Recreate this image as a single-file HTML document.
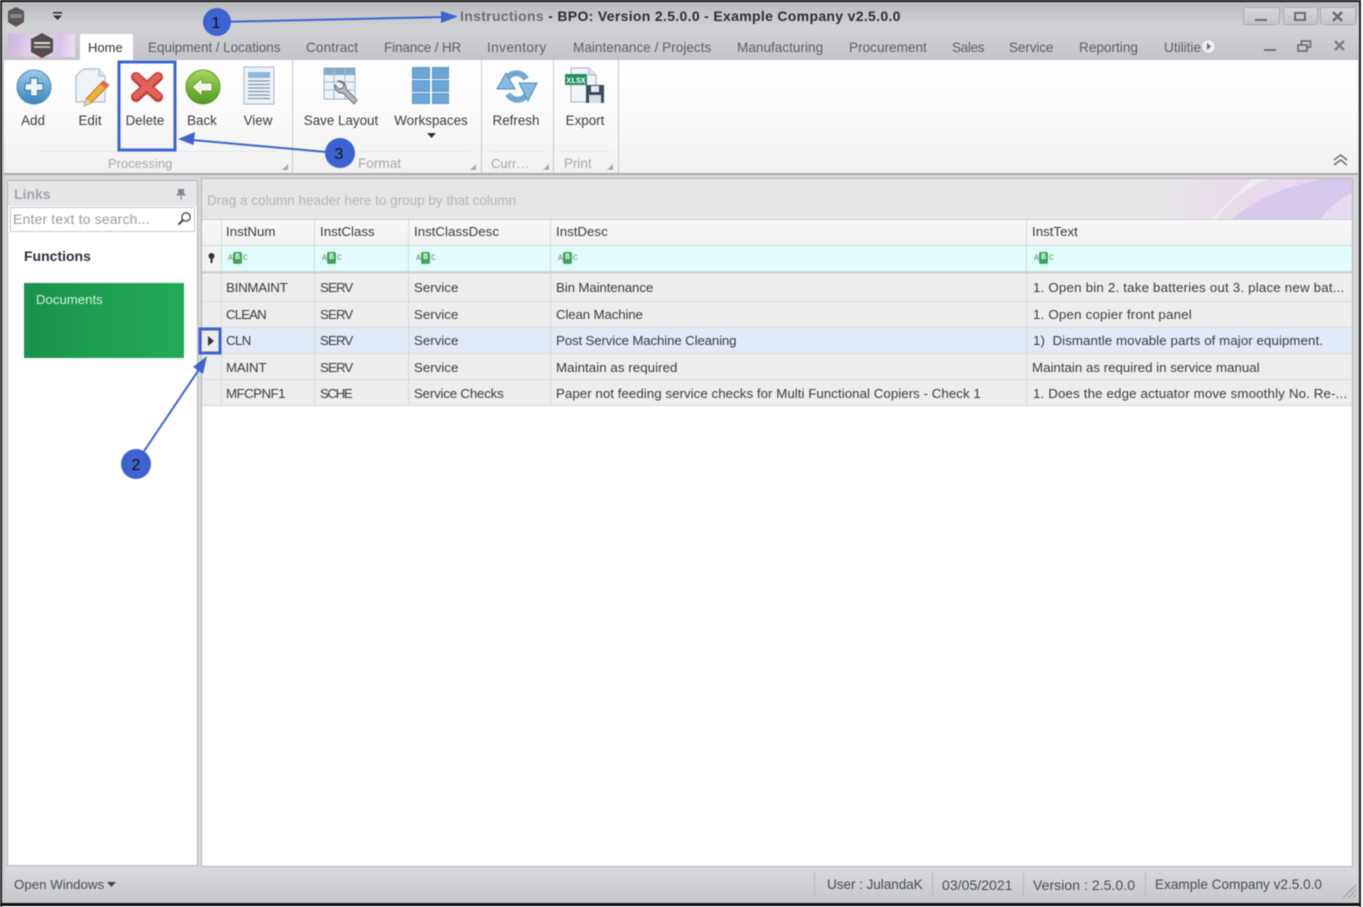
<!DOCTYPE html>
<html><head><meta charset="utf-8"><style>
html,body{margin:0;padding:0;width:1363px;height:907px;overflow:hidden;background:#fff}
body{font-family:"Liberation Sans",sans-serif;font-size:13.3px;color:#3c3c3c}
#w{position:absolute;left:0;top:0;width:1363px;height:907px;overflow:hidden;filter:blur(.4px)}
.a{position:absolute}
.t{position:absolute;white-space:nowrap;line-height:16px}
.c{transform:translateX(-50%)}
.tab{color:#5f6066;top:40px;font-size:13.6px}
.g{color:#a9a9a9;top:156px;font-size:13px}
.l{position:absolute;background:#d4d4d4}
.abc{position:absolute;top:252px;width:22px;height:13px}
.abc i{position:absolute;font:normal 8px "Liberation Mono",monospace;color:#777;top:3px;line-height:7px}
.abc b{position:absolute;left:5px;top:0;width:9px;height:12px;background:#3fa653;border-radius:2px;color:#dff;font:bold 8px "Liberation Mono",monospace;line-height:12px;text-align:center}
.sb{color:#4a4c58;top:877px;font-size:13.6px}
.sep{position:absolute;top:872px;width:1px;height:24px;background:#b9bac0}
.rb{font-size:13.4px;top:113px}
.k{letter-spacing:-.9px}
</style></head><body><div id="w">
<!-- window -->
<div class="a" style="left:2px;top:2px;width:1357px;height:901px;background:linear-gradient(#c9cacd,#c4c5c9 60px);"></div>
<div class="a" style="left:2px;top:2px;width:1357px;height:58px;background:linear-gradient(#b9babd,#d2d3d6 25px,#c2c3c8)"></div>

<!-- app icon -->
<svg class="a" style="left:6px;top:6px" width="20" height="22"><polygon points="10,1 18,5 18,16 10,21 2,16 2,5" fill="#5a5656"/><rect x="4" y="8" width="12" height="4" fill="#8a8888"/><path d="M8 16h5l-2 3z" fill="#7d3b3b"/></svg>
<svg class="a" style="left:52px;top:12px" width="11" height="9"><rect x="1" y="0" width="9" height="1.6" fill="#333"/><path d="M1 3.5h9L5.500 8z" fill="#333"/></svg>

<!-- title -->
<div class="t" style="left:460px;top:8px;font-weight:bold;font-size:14px;color:#2d2d2f;letter-spacing:.32px"><span style="color:#6c6d72">Instructions</span> - BPO: Version 2.5.0.0 - Example Company v2.5.0.0</div>

<!-- window buttons -->
<div class="a" style="left:1243px;top:7px;width:35px;height:16px;border:1px solid #a9aaae;border-radius:3px;background:linear-gradient(#d6d7da,#c3c4c8)"></div>
<div class="a" style="left:1283px;top:7px;width:33px;height:16px;border:1px solid #a9aaae;border-radius:3px;background:linear-gradient(#d6d7da,#c3c4c8)"></div>
<div class="a" style="left:1320px;top:7px;width:34px;height:16px;border:1px solid #a9aaae;border-radius:3px;background:linear-gradient(#d6d7da,#c3c4c8)"></div>
<div class="a" style="left:1255px;top:19px;width:12px;height:2px;background:#6a6b70"></div>
<div class="a" style="left:1294px;top:12px;width:8px;height:5px;border:2px solid #6a6b70"></div>
<svg class="a" style="left:1331px;top:11px" width="13" height="11"><path d="M2 1l9 9M11 1l-9 9" stroke="#6a6b70" stroke-width="2.4"/></svg>

<!-- app menu button -->
<div class="a" style="left:8px;top:34px;width:67px;height:23px;background:linear-gradient(100deg,#c9b2dd,#e6d3ee 40%,#d9c3e8 75%,#efe2f2)"></div>
<svg class="a" style="left:29px;top:32px" width="26" height="27"><polygon points="13,1 24,7 24,20 13,26 2,20 2,7" fill="#514e4e"/><rect x="5" y="10" width="16" height="2" fill="#ddd"/><rect x="5" y="14" width="16" height="2" fill="#bbb"/><path d="M9 21h7l-3 4z" fill="#8a3b3b"/></svg>

<!-- tabs -->
<div class="a" style="left:80px;top:34px;width:53px;height:27px;background:#fff;border-radius:2px 2px 0 0"></div>
<div class="t" style="left:88px;top:40px;color:#333;font-size:13px">Home</div>
<div class="t tab" style="left:148px;letter-spacing:-.1px">Equipment / Locations</div>
<div class="t tab" style="left:306px;letter-spacing:.1px">Contract</div>
<div class="t tab" style="left:384px;letter-spacing:-.18px">Finance / HR</div>
<div class="t tab" style="left:487px;letter-spacing:.4px">Inventory</div>
<div class="t tab" style="left:573px">Maintenance / Projects</div>
<div class="t tab" style="left:737px">Manufacturing</div>
<div class="t tab" style="left:849px">Procurement</div>
<div class="t tab" style="left:952px;letter-spacing:-.4px">Sales</div>
<div class="t tab" style="left:1009px;letter-spacing:-.15px">Service</div>
<div class="t tab" style="left:1079px">Reporting</div>
<div class="t tab" style="left:1164px;width:38px;overflow:hidden">Utilities</div>
<svg class="a" style="left:1201px;top:39px" width="15" height="15"><circle cx="7.500" cy="7.500" r="7" fill="#eee" stroke="#bbb"/><path d="M6 4l4 3.500L6 11z" fill="#666"/></svg>
<div class="a" style="left:1264px;top:49px;width:12px;height:2px;background:#73747a"></div>
<svg class="a" style="left:1297px;top:40px" width="15" height="13"><rect x="4.500" y="1" width="9" height="6" fill="none" stroke="#6a6b70" stroke-width="1.600"/><rect x="1" y="5" width="9" height="6" fill="#c4c5c9" stroke="#6a6b70" stroke-width="1.600"/></svg>
<svg class="a" style="left:1333px;top:40px" width="13" height="11"><path d="M2 1l9 9M11 1l-9 9" stroke="#7a7b80" stroke-width="2.400"/></svg>

<!-- ribbon -->
<div class="a" style="left:4px;top:60px;width:1354px;height:113px;background:linear-gradient(#fff,#fafafa 50%,#f1f1f2);border-bottom:2px solid #a9aaae;box-sizing:content-box"></div>
<div class="l" style="left:292px;top:60px;width:1px;height:113px;background:#c9cacc"></div>
<div class="l" style="left:481px;top:60px;width:1px;height:113px;background:#c9cacc"></div>
<div class="l" style="left:553px;top:60px;width:1px;height:113px;background:#c9cacc"></div>
<div class="l" style="left:618px;top:60px;width:1px;height:113px;background:#c9cacc"></div>
<div class="l" style="left:40px;top:151px;width:240px;height:1px;background:#e6e6e7"></div>
<div class="l" style="left:300px;top:151px;width:170px;height:1px;background:#e6e6e7"></div>
<div class="l" style="left:490px;top:151px;width:55px;height:1px;background:#e6e6e7"></div>
<div class="l" style="left:560px;top:151px;width:50px;height:1px;background:#e6e6e7"></div>

<!-- add -->
<svg class="a" style="left:15px;top:68px" width="38" height="38"><defs><linearGradient id="ga" x1="0" y1="0" x2="0" y2="1"><stop offset="0" stop-color="#9ccbe8"/><stop offset="1" stop-color="#3a86c0"/></linearGradient><linearGradient id="gb" x1="0" y1="0" x2="0" y2="1"><stop offset="0" stop-color="#a9d65c"/><stop offset="1" stop-color="#4f9a1e"/></linearGradient></defs><circle cx="19" cy="19" r="17" fill="url(#ga)" stroke="#4b8dbd" stroke-width="1"/><path d="M15.500 10h7v5.500H28v7h-5.500V28h-7v-5.500H10v-7h5.500z" fill="#eef5fb" stroke="#3f7fb0" stroke-width="1.200"/></svg>
<!-- edit -->
<svg class="a" style="left:74px;top:67px" width="38" height="40"><path d="M9 2h16l6 7v26H2V9z" fill="#eef2f9" stroke="#b0bbcc" stroke-width="1.200"/><path d="M25 2v7h6" fill="#dde4ee" stroke="#b0bbcc"/><path d="M29 14l6 4-18 18-7 3 2-7z" fill="#f2b133" stroke="#a5701a" stroke-width=".8"/><path d="M29 14l6 4-3 3-6-4z" fill="#d8665c"/><path d="M12 32l-2 7 7-3z" fill="#e6d0a8"/></svg>
<!-- delete -->
<svg class="a" style="left:130px;top:71px" width="34" height="32"><path d="M6 6L28 26M28 6L6 26" stroke="#c23b36" stroke-width="10" stroke-linecap="round"/><path d="M6 5.500L28 25M28 5.500L6 25" stroke="#e2615a" stroke-width="6.500" stroke-linecap="round"/></svg>
<!-- back -->
<svg class="a" style="left:185px;top:69px" width="36" height="36"><circle cx="18" cy="18" r="17" fill="url(#gb)" stroke="#5a9a2a"/><path d="M7 18l10-9v5h10v8H17v5z" fill="#f4f8ec" stroke="#6f9f3f"/></svg>
<!-- view -->
<svg class="a" style="left:243px;top:66px" width="33" height="40"><rect x="1" y="1" width="30" height="37" fill="#eef3fa" stroke="#a8b4c8"/><rect x="5" y="6" width="22" height="6" fill="#8fb6dc"/><path d="M5 15h22M5 18.500h22M5 22h22M5 25.500h22M5 29h22M5 32.500h22" stroke="#8295ad" stroke-width="1.200"/></svg>
<!-- save layout -->
<svg class="a" style="left:323px;top:66px" width="38" height="40"><rect x="1" y="2" width="31" height="31" fill="#eef3f9" stroke="#9fb0c4"/><rect x="1" y="2" width="31" height="7" fill="#82aacd"/><path d="M1 16h31M1 24h31M11 2v31M22 2v31" stroke="#a9bad0"/><path d="M15 15a7 7 0 0 1 8 8l11 11-3 4-11-11a7 7 0 0 1-8-8l4 4 4-1 1-4z" fill="#b7babd" stroke="#6b6f74"/></svg>
<!-- workspaces -->
<svg class="a" style="left:412px;top:67px" width="38" height="38" fill="#6ba6d6" stroke="#5a96c8"><rect x=".5" y=".5" width="17" height="11"/><rect x="20.500" y=".5" width="16" height="11"/><rect x=".5" y="13.500" width="17" height="11"/><rect x="20.500" y="13.500" width="16" height="11"/><rect x=".5" y="26.500" width="17" height="10"/><rect x="20.500" y="26.500" width="16" height="10"/></svg>
<!-- refresh -->
<svg class="a" style="left:496px;top:68px" width="42" height="36" fill="none"><path d="M10 20A11 11 0 0 1 30 11" stroke="#6fa9d0" stroke-width="6"/><path d="M32 17A11 11 0 0 1 12 26" stroke="#6fa9d0" stroke-width="6"/><path d="M1 21L10 5l9 16z" fill="#86bce0" stroke="#4c8cbc"/><path d="M41 15L32 33l-9-18z" fill="#86bce0" stroke="#4c8cbc"/></svg>
<!-- export -->
<svg class="a" style="left:565px;top:67px" width="40" height="38"><path d="M6 1h18l7 7v27H6z" fill="#f1f4f9" stroke="#a5b0c2"/><path d="M24 1v7h7" fill="#dfe5ee" stroke="#a5b0c2"/><rect x="0" y="7" width="22" height="11" fill="#1f8f5f"/><text x="11" y="16" font-family="Liberation Mono" font-size="8" font-weight="bold" fill="#fff" text-anchor="middle">XLSX</text><rect x="21" y="18" width="18" height="18" fill="#3c4a5e"/><rect x="26" y="19" width="8" height="6" fill="#e8ecf2"/><rect x="24" y="28" width="12" height="8" fill="#d5dde8"/></svg>

<!-- ribbon labels -->
<div class="t c rb" style="left:33px">Add</div>
<div class="t c rb" style="left:90px">Edit</div>
<div class="t c rb" style="left:145px">Delete</div>
<div class="t c rb" style="left:202px">Back</div>
<div class="t c rb" style="left:258px">View</div>
<div class="t c rb" style="left:341px">Save Layout</div>
<div class="t c rb" style="left:431px">Workspaces</div>
<svg class="a" style="left:427px;top:133px" width="9" height="6"><path d="M0 0h9L4.500 5z" fill="#333"/></svg>
<div class="t c rb" style="left:516px">Refresh</div>
<div class="t c rb" style="left:585px">Export</div>
<div class="t g" style="left:108px">Processing</div>
<div class="t g" style="left:358px;font-size:13.6px">Format</div>
<div class="t g" style="left:491px">Curr&hellip;</div>
<div class="t g" style="left:564px;font-size:13.4px">Print</div>
<svg class="a" style="left:0;top:0" width="1363" height="180" fill="#a9a9ab"><path d="M288 164v6h-6zM476 164v6h-6zM549 164v6h-6zM613 164v6h-6z"/><path d="M1334 160l6.500-5 6.500 5M1334 165l6.500-5 6.500 5" fill="none" stroke="#6f7074" stroke-width="1.500"/></svg>

<!-- body bg -->
<div class="a" style="left:4px;top:175px;width:1354px;height:692px;background:#d7d8da"></div>

<!-- left panel -->
<div class="a" style="left:7px;top:180px;width:189px;height:684px;background:#fff;border:1px solid #b4b5b8"></div>
<div class="a" style="left:8px;top:181px;width:189px;height:25px;background:#e6e6e8"></div>
<div class="t" style="left:14px;top:186px;font-weight:bold;color:#a2a4a9;font-size:14px">Links</div>
<svg class="a" style="left:176px;top:188px" width="10" height="12"><path d="M2 1h6v5h1.500v1.500H.5V6H2zM4.500 7.500h1V12h-1z" fill="#85868b"/></svg>
<div class="a" style="left:10px;top:207px;width:183px;height:23px;background:#fff;border:1px solid #c8c9cc"></div>
<div class="t" style="left:13px;top:211px;color:#9a9a9c;font-size:14px;letter-spacing:.16px">Enter text to search...</div>
<svg class="a" style="left:177px;top:211px" width="15" height="15"><circle cx="9" cy="6" r="4.200" fill="none" stroke="#444" stroke-width="1.300"/><path d="M6 9L1.500 13.500" stroke="#444" stroke-width="2"/></svg>
<div class="t" style="left:24px;top:248px;font-weight:bold;color:#2b3040;font-size:14px">Functions</div>
<div class="a" style="left:24px;top:283px;width:160px;height:75px;background:linear-gradient(90deg,#19934b,#22ab57)"></div>
<div class="t" style="left:36px;top:292px;color:#d7f0df;font-size:13.2px">Documents</div>

<!-- grid -->
<div class="a" style="left:201px;top:178px;width:1150px;height:687px;background:#fff;border:1px solid #b4b5b8;box-sizing:content-box"></div>
<div class="a" style="left:202px;top:179px;width:1150px;height:40px;background:#e6e6e8;overflow:hidden">
<svg width="1150" height="40" style="position:absolute;left:0;top:0"><defs><linearGradient id="gp" x1="0" x2="1" y1="0" y2="0"><stop offset="0" stop-color="#e6e6e8"/><stop offset=".5" stop-color="#ead9ec"/><stop offset="1" stop-color="#e7dcf0"/></linearGradient></defs><rect x="960" width="190" height="40" fill="url(#gp)"/><path d="M1030 40c25-20 50-32 90-40h30v14c-15 8-25 17-32 26z" fill="#d6c9ec"/><path d="M1010 40c15-16 30-30 40-40h16c-25 10-40 25-52 40z" fill="#eeeef0"/></svg></div>
<div class="t" style="left:207px;top:193px;color:#b4b5b8;font-size:13.5px">Drag a column header here to group by that column</div>

<!-- header row -->
<div class="a" style="left:202px;top:220px;width:1150px;height:25px;background:linear-gradient(#f8f8f8,#f1f1f2)"></div>
<div class="a" style="left:222px;top:246px;width:1130px;height:25px;background:#e0fdfb"></div>
<div class="a" style="left:202px;top:246px;width:20px;height:25px;background:#f2f2f3"></div>
<div class="a" style="left:202px;top:219px;width:1150px;height:1px;background:#cfd0d2"></div>
<div class="a" style="left:202px;top:245px;width:1150px;height:1px;background:#d5d6d8"></div>
<div class="a" style="left:202px;top:271px;width:1150px;height:3px;background:#d2d3d5"></div>
<div class="t" style="left:226px;top:224px">InstNum</div>
<div class="t" style="left:320px;top:224px">InstClass</div>
<div class="t" style="left:414px;top:224px">InstClassDesc</div>
<div class="t" style="left:556px;top:224px">InstDesc</div>
<div class="t" style="left:1032px;top:224px">InstText</div>
<svg class="a" style="left:207px;top:253px" width="9" height="11"><circle cx="4.500" cy="3" r="3" fill="#333"/><path d="M3.500 5h2v5h-2z" fill="#333"/></svg>
<div class="abc" style="left:228px"><i style="left:0">A</i><b>B</b><i style="left:15px">C</i></div>
<div class="abc" style="left:322px"><i style="left:0">A</i><b>B</b><i style="left:15px">C</i></div>
<div class="abc" style="left:416px"><i style="left:0">A</i><b>B</b><i style="left:15px">C</i></div>
<div class="abc" style="left:558px"><i style="left:0">A</i><b>B</b><i style="left:15px">C</i></div>
<div class="abc" style="left:1034px"><i style="left:0">A</i><b>B</b><i style="left:15px">C</i></div>

<!-- rows -->
<div class="a" style="left:202px;top:275px;width:1150px;height:131px;background:#eeeded"></div>
<div class="a" style="left:222px;top:328px;width:1130px;height:25px;background:#e1ebf8"></div>
<div class="a" style="left:202px;top:301px;width:1150px;height:1px;background:#d8d8da"></div>
<div class="a" style="left:202px;top:327px;width:1150px;height:1px;background:#d8d8da"></div>
<div class="a" style="left:202px;top:353px;width:1150px;height:1px;background:#d8d8da"></div>
<div class="a" style="left:202px;top:379px;width:1150px;height:1px;background:#d8d8da"></div>
<div class="a" style="left:202px;top:405px;width:1150px;height:1px;background:#d8d8da"></div>
<div class="a" style="left:221px;top:220px;width:1px;height:186px;background:#d8d8da"></div>
<div class="a" style="left:314px;top:220px;width:1px;height:186px;background:#d8d8da"></div>
<div class="a" style="left:408px;top:220px;width:1px;height:186px;background:#d8d8da"></div>
<div class="a" style="left:550px;top:220px;width:1px;height:186px;background:#d8d8da"></div>
<div class="a" style="left:1026px;top:220px;width:1px;height:186px;background:#d8d8da"></div>

<div class="t" style="left:226px;top:280px;letter-spacing:-.25px">BINMAINT</div><div class="t k" style="left:320px;top:280px">SERV</div><div class="t" style="left:414px;top:280px">Service</div><div class="t" style="left:556px;top:280px;letter-spacing:-.13px">Bin Maintenance</div><div class="t" style="left:1033px;top:280px;letter-spacing:.2px">1. Open bin 2. take batteries out 3. place new bat...</div>
<div class="t k" style="left:226px;top:307px">CLEAN</div><div class="t k" style="left:320px;top:307px">SERV</div><div class="t" style="left:414px;top:307px">Service</div><div class="t" style="left:556px;top:307px;letter-spacing:-.15px">Clean Machine</div><div class="t" style="left:1033px;top:307px;letter-spacing:.2px">1. Open copier front panel</div>
<div class="t" style="left:226px;top:333px;letter-spacing:-.6px">CLN</div><div class="t k" style="left:320px;top:333px">SERV</div><div class="t" style="left:414px;top:333px">Service</div><div class="t" style="left:556px;top:333px;letter-spacing:-.15px">Post Service Machine Cleaning</div><div class="t" style="left:1033px;top:333px;letter-spacing:.07px">1)&nbsp; Dismantle movable parts of major equipment.</div>
<div class="t" style="left:226px;top:360px;letter-spacing:-.2px">MAINT</div><div class="t k" style="left:320px;top:360px">SERV</div><div class="t" style="left:414px;top:360px">Service</div><div class="t" style="left:556px;top:360px;letter-spacing:.05px">Maintain as required</div><div class="t" style="left:1032px;top:360px">Maintain as required in service manual</div>
<div class="t" style="left:226px;top:386px;letter-spacing:-.55px">MFCPNF1</div><div class="t k" style="left:320px;top:386px;letter-spacing:-1.400px">SCHE</div><div class="t" style="left:414px;top:386px;letter-spacing:-.2px">Service Checks</div><div class="t" style="left:556px;top:386px;letter-spacing:.04px">Paper not feeding service checks for Multi Functional Copiers - Check 1</div><div class="t" style="left:1033px;top:386px;letter-spacing:.15px">1. Does the edge actuator move smoothly No. Re-...</div>

<svg class="a" style="left:208px;top:336px" width="6" height="10"><path d="M0 0l6 5-6 5z" fill="#333"/></svg>

<!-- status bar -->
<div class="a" style="left:4px;top:867px;width:1354px;height:36px;background:linear-gradient(#d9dadc,#c6c7cc)"></div>
<div class="t sb" style="left:14px;font-size:13.300px">Open Windows</div>
<svg class="a" style="left:107px;top:882px" width="10" height="6"><path d="M0 0h9L4.500 5z" fill="#444"/></svg>
<div class="sep" style="left:814px"></div><div class="sep" style="left:932px"></div><div class="sep" style="left:1023px"></div><div class="sep" style="left:1145px"></div>
<div class="t sb" style="left:827px;letter-spacing:-.07px">User : JulandaK</div>
<div class="t sb" style="left:942px;font-size:14px;letter-spacing:.05px">03/05/2021</div>
<div class="t sb" style="left:1033px;font-size:14px;letter-spacing:.05px">Version : 2.5.0.0</div>
<div class="t sb" style="left:1155px">Example Company v2.5.0.0</div>
<svg class="a" style="left:1342px;top:884px" width="15" height="15"><path d="M1 14L14 1M6 14l8-8M11 14l3-3" stroke="#a0a1a6" stroke-width="1.200"/></svg>

<!-- annotations -->
<svg class="a" style="left:0;top:0" width="1363" height="907">
<g fill="none" stroke="#3d63d0">
<rect x="119" y="62" width="56" height="88" stroke-width="3"/>
<rect x="200" y="329" width="20" height="24" stroke-width="3"/>
<path d="M216 22L445 17" stroke-width="2"/>
<path d="M338 153L192 140" stroke-width="2"/>
<path d="M136 463L200 368" stroke-width="2"/>
</g>
<g fill="#3d63d0">
<path d="M458 16.500L441 11v12z"/>
<path d="M178 139l17-7-1.500 13z"/>
<path d="M207 356l-14 11 10 7z"/>
<circle cx="217" cy="22" r="14"/><circle cx="340" cy="153" r="15"/><circle cx="136" cy="464" r="15"/>
</g>
<g font-family="Liberation Sans" font-size="16" fill="#111" text-anchor="middle">
<text x="216" y="28">1</text><text x="339" y="159">3</text><text x="136" y="470">2</text>
</g>
</svg>
<!-- outer frame -->
<div class="a" style="left:0;top:0;width:1363px;height:2px;background:#111"></div>
<div class="a" style="left:0;top:0;width:2px;height:907px;background:#222"></div>
<div class="a" style="left:1359px;top:0;width:2px;height:907px;background:#222"></div>
<div class="a" style="left:1361px;top:0;width:2px;height:907px;background:#fff"></div>
<div class="a" style="left:0;top:903px;width:1361px;height:3px;background:#111"></div>
</div></body></html>
